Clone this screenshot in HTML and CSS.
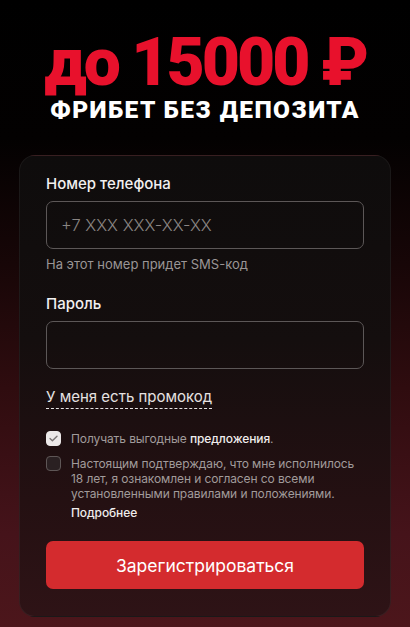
FILE: index.html
```html
<!DOCTYPE html>
<html lang="ru">
<head>
<meta charset="utf-8">
<link rel="stylesheet" href="styles.css">
</head>
<body>
<div class="page">
  <header class="hero">
    <div class="amount">до 15000 ₽</div>
    <div class="subtitle">ФРИБЕТ БЕЗ ДЕПОЗИТА</div>
  </header>
  <form class="card">
    <div class="label">Номер телефона</div>
    <div class="input"><span class="placeholder">+7 XXX XXX-XX-XX</span></div>
    <div class="hint">На этот номер придет SMS-код</div>
    <div class="label label-pass">Пароль</div>
    <div class="input"></div>
    <div class="promo"><span>У меня есть промокод</span></div>
    <div class="check check-first">
      <span class="box checked">
        <svg width="9" height="7" viewBox="0 0 9 7"><path d="M1 3.6 L3.4 5.8 L8 1.2" fill="none" stroke="#7a7474" stroke-width="1.4" stroke-linecap="round" stroke-linejoin="round"/></svg>
      </span>
      <span class="check-text">Получать выгодные <b>предложения</b>.</span>
    </div>
    <div class="check check-second">
      <span class="box"></span>
      <div class="check-text">Настоящим подтверждаю, что мне исполнилось 18 лет, я ознакомлен и согласен со всеми установленными правилами и положениями.
        <div class="more">Подробнее</div>
      </div>
    </div>
    <div class="button">Зарегистрироваться</div>
  </form>
</div>
</body>
</html>
```
FILE: styles.css
```css
html, body {
  margin: 0;
  padding: 0;
}
body {
  width: 410px;
  height: 627px;
  overflow: hidden;
  font-family: Inter, "Noto Sans", sans-serif;
  background: linear-gradient(180deg, #000 0%, #030101 22%, #170607 42%, #2f0c0f 62%, #45131a 85%, #4c161b 100%);
}
.page {
  display: flex;
  flex-direction: column;
  align-items: stretch;
}
.hero {
  display: flex;
  flex-direction: column;
  align-items: center;
  padding-top: 30px;
  height: 155px;
  box-sizing: border-box;
}
.amount {
  color: #e8112c;
  font-family: Roboto, "Noto Sans", sans-serif;
  font-weight: 900;
  font-size: 66px;
  line-height: 66px;
  letter-spacing: -3px;
}
.subtitle {
  color: #fff;
  font-family: Roboto, "Noto Sans", sans-serif;
  font-weight: 900;
  font-size: 24.5px;
  line-height: 28px;
  letter-spacing: 1.4px;
}
.card {
  margin: 0 19px;
  padding: 19px 26px 27px;
  border-radius: 16px;
  border: 1px solid rgba(255, 255, 255, 0.05);
  background: linear-gradient(180deg, #0e0c0c 0%, #140e0e 40%, #241012 75%, #2e1316 100%);
  display: flex;
  flex-direction: column;
  height: 462px;
  box-sizing: border-box;
}
.label {
  color: #f2f0f0;
  font-size: 15px;
  line-height: 18px;
  font-weight: 500;
}
.label-pass {
  margin-top: 23px;
}
.input {
  margin-top: 8px;
  height: 48px;
  box-sizing: border-box;
  border: 1px solid #5c5757;
  border-radius: 7px;
  display: flex;
  align-items: center;
  padding-left: 14px;
}
.placeholder {
  color: #8a8583;
  font-size: 16.5px;
  font-weight: 300;
}
.hint {
  margin-top: 7px;
  color: #9a9595;
  font-size: 13px;
  line-height: 16px;
}
.promo {
  margin-top: 18px;
  font-size: 15px;
  line-height: 20px;
  color: #e6e2e2;
}
.promo span {
  border-bottom: 1px dashed #e6e2e2;
  padding-bottom: 2px;
}
.check {
  display: flex;
  gap: 10px;
  align-items: flex-start;
}
.check-first {
  margin-top: 24px;
}
.check-second {
  margin-top: 10px;
}
.box {
  flex: none;
  width: 15px;
  height: 15px;
  box-sizing: border-box;
  border: 1px solid #5e5656;
  border-radius: 4px;
  background: #2a2022;
  display: flex;
  align-items: center;
  justify-content: center;
}
.box.checked {
  background: #ece8e8;
  border-color: #ece8e8;
}
.check-text {
  color: #a19b9b;
  font-size: 12px;
  line-height: 15.2px;
  letter-spacing: -0.1px;
}
.check-first .check-text {
  line-height: 15px;
}
.check-text b {
  color: #f0eded;
  font-weight: 500;
}
.more {
  margin-top: 3px;
  color: #f0eded;
  font-size: 12px;
  font-weight: 500;
}
.button {
  margin-top: auto;
  height: 48px;
  border-radius: 7px;
  background: #d42b2e;
  color: #fff;
  font-size: 17.5px;
  display: flex;
  align-items: center;
  justify-content: center;
}
```
